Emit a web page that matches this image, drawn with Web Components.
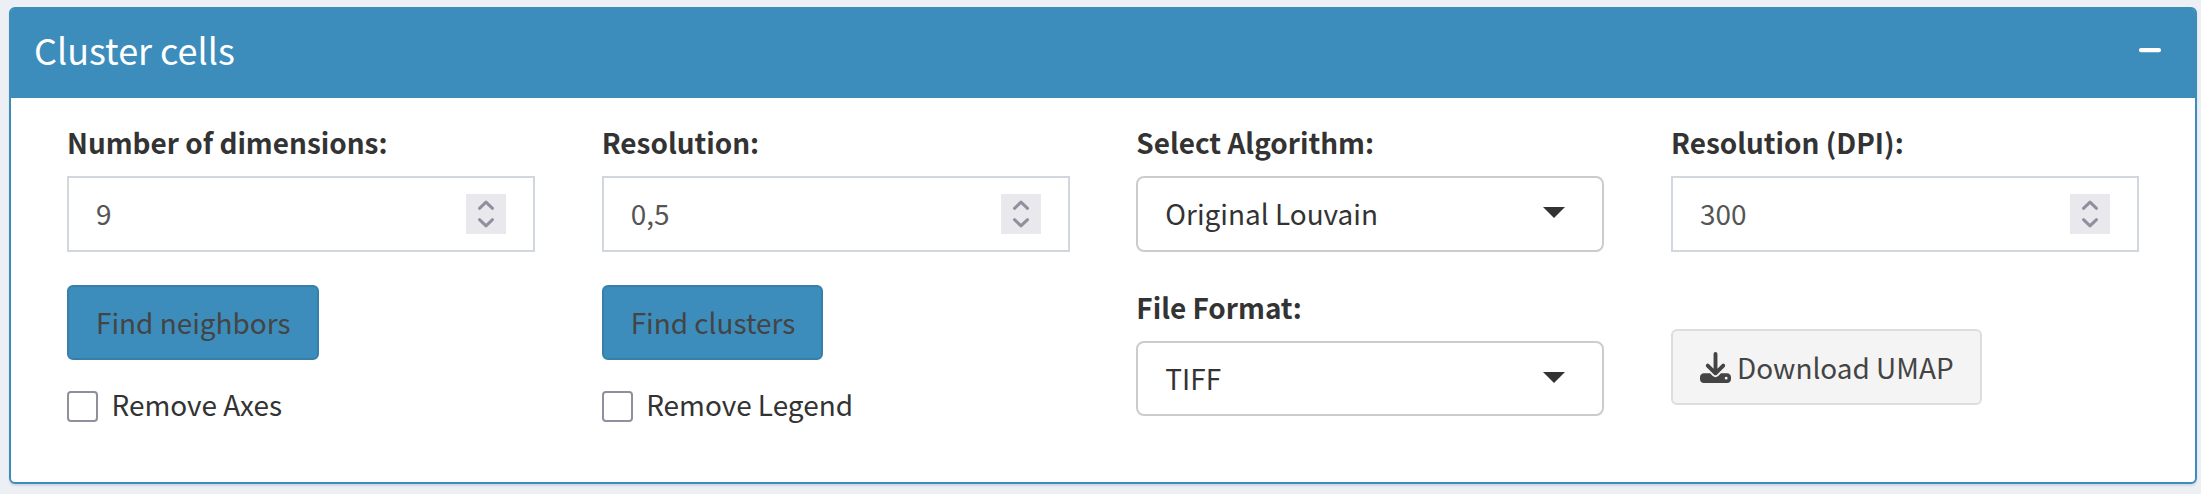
<!DOCTYPE html>
<html lang="en">
<head>
<meta charset="utf-8">
<title>Cluster cells</title>
<style>
html{height:100%}
body{margin:0;height:100%;box-sizing:border-box;padding:7px 4px 10px 9px;overflow:hidden;background:#ecf0f5;color:#333;font:400 27.93px/40px "Noto Sans CJK SC","Source Sans Pro",sans-serif}
</style>
</head>
<body>
<box-panel heading="Cluster cells">
  <form-column>
    <form-field label="Number of dimensions:"><number-input value="9"></number-input></form-field>
    <action-button>Find neighbors</action-button>
    <check-option>Remove Axes</check-option>
  </form-column>
  <form-column>
    <form-field label="Resolution:"><number-input value="0,5"></number-input></form-field>
    <action-button>Find clusters</action-button>
    <check-option>Remove Legend</check-option>
  </form-column>
  <form-column>
    <form-field label="Select Algorithm:"><select-box>Original Louvain</select-box></form-field>
    <form-field label="File Format:" style="margin-top:35px"><select-box style="height:75px">TIFF</select-box></form-field>
  </form-column>
  <form-column>
    <form-field label="Resolution (DPI):"><number-input value="300"></number-input></form-field>
    <download-button>Download UMAP</download-button>
  </form-column>
</box-panel>
<script>
function define(name, html) {
  customElements.define(name, class extends HTMLElement {
    constructor() {
      super();
      this.attachShadow({mode: 'open'}).innerHTML = html;
    }
    connectedCallback() {
      for (const el of this.shadowRoot.querySelectorAll('[data-attr]'))
        el.textContent = this.getAttribute(el.dataset.attr);
    }
  });
}

define('box-panel', `<style>
:host{display:flex;flex-direction:column;height:100%;box-sizing:border-box;border:2px solid #3c8dbc;border-radius:6px;background:#fff;box-shadow:0 2px 2px rgba(0,0,0,.1)}
header{display:flex;align-items:center;justify-content:space-between;height:89px;box-sizing:border-box;padding:0 34px 6px 23px;background:#3c8dbc;color:#fff;border-radius:3px 3px 0 0}
h3{margin:-3px 0 0;font-size:36px;line-height:44px;font-weight:400}
svg{display:block;margin-top:-1px}
main{display:grid;grid-template-columns:repeat(4,1fr);column-gap:66.67px;padding:24px 56px 0}
</style>
<header><h3 data-attr="heading"></h3><svg width="22" height="5" viewBox="0 0 22 5"><rect width="22" height="4.3" rx="2" fill="#fff"/></svg></header>
<main><slot></slot></main>`);

define('form-column', `<style>:host{display:flex;flex-direction:column;align-items:flex-start;min-width:0}</style><slot></slot>`);

define('form-field', `<style>
:host{display:block;width:100%}
label{display:block;height:40px;margin-bottom:14px;font-weight:700;white-space:nowrap}
</style><label data-attr="label"></label><slot></slot>`);

define('number-input', `<style>
:host{display:flex;align-items:center;justify-content:space-between;height:76px;box-sizing:border-box;border:2px solid #d2d6de;background:#fff;color:#555;padding:0 27px}
span{margin-top:-2px}
svg{display:block;background:#e9e9ed}
</style><span data-attr="value"></span>
<svg width="40" height="40" viewBox="0 0 40 40" fill="none" stroke="#8f8f9d" stroke-width="3" stroke-linecap="round" stroke-linejoin="round"><path d="M13.5 14.3 20 8.2l6.5 6.1M13.5 25.7l6.5 6.1 6.5-6.1"/></svg>`);

define('select-box', `<style>
:host{display:flex;align-items:center;justify-content:space-between;height:76px;box-sizing:border-box;border:2px solid #ccc;border-radius:8px;background:#fff;padding:0 37px 0 27px}
span{margin-top:-2px}
svg{display:block;margin-top:-3px}
</style><span><slot></slot></span><svg width="22" height="11" viewBox="0 0 22 11"><path d="M0 0h22L11 11z" fill="#333"/></svg>`);

define('action-button', `<style>
:host{display:block;margin-top:33px}
button{display:block;height:75px;box-sizing:border-box;margin:0;border:2px solid #367fa9;border-radius:6px;background:#3c8dbc;color:#444;font:inherit;padding:0 26px 2px 27px}
</style><button><slot></slot></button>`);

define('check-option', `<style>
:host{display:flex;align-items:center;height:40px;margin-top:24px}
i{width:31px;height:31px;box-sizing:border-box;border:2px solid #8f8f9d;border-radius:4px;background:#fff;margin:4px 13.5px 0 0}
</style><i></i><span><slot></slot></span>`);

define('download-button', `<style>
:host{display:block;margin-top:77px}
button{display:flex;align-items:center;height:76px;box-sizing:border-box;margin:0;border:2px solid #ddd;border-radius:6px;background:#f4f4f4;color:#444;font:inherit;padding:0 26px 0 27px}
svg{display:block;margin-right:6px}
</style><button><svg width="31" height="31" viewBox="0 0 512 512" fill="#444"><path d="M288 32c0-17.7-14.3-32-32-32s-32 14.3-32 32V274.7l-73.4-73.4c-12.5-12.5-32.8-12.5-45.3 0s-12.5 32.8 0 45.3l128 128c12.5 12.5 32.8 12.5 45.3 0l128-128c12.5-12.5 12.5-32.8 0-45.3s-32.8-12.5-45.3 0L288 274.7V32zM64 352c-35.3 0-64 28.7-64 64v32c0 35.3 28.7 64 64 64H448c35.3 0 64-28.7 64-64V416c0-35.3-28.7-64-64-64H346.5l-45.3 45.3c-25 25-65.5 25-90.5 0L165.5 352H64zm368 56a24 24 0 1 1 0 48 24 24 0 1 1 0-48z"/></svg><slot></slot></button>`);
</script>
</body>
</html>
